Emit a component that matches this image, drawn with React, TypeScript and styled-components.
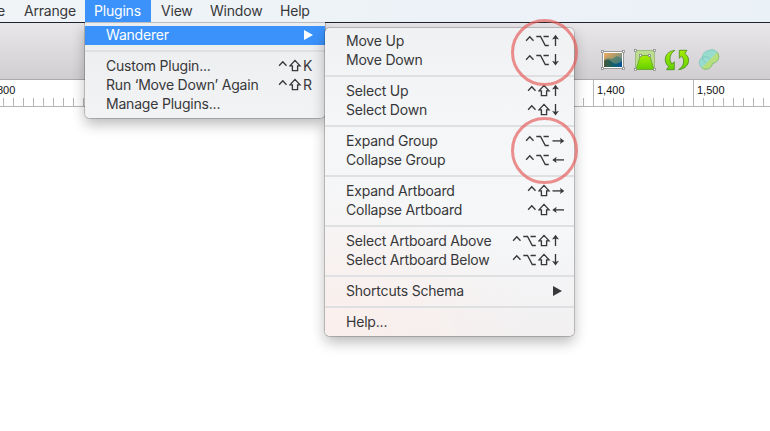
import React from "react";
import styled, { createGlobalStyle } from "styled-components";

const Global = createGlobalStyle`
  * { box-sizing: border-box; }
  body { margin: 0; background: #fff; overflow: hidden; }
`;

const Screen = styled.div`
  position: relative;
  width: 770px;
  height: 431px;
  overflow: hidden;
  background: #fff;
  color: #38383a;
  font: 14px/19px Inter, "Liberation Sans", sans-serif;
`;

const MenuBar = styled.nav`
  height: 23px;
  display: flex;
  background: linear-gradient(90deg, #f0f4f7, #eaf1f7);
  border-bottom: 1px solid #20252d;
`;

const BarItem = styled.div<{ $w: number; $pad: number; $active?: boolean }>`
  width: ${(p) => p.$w}px;
  height: ${(p) => (p.$active ? 22 : 23)}px;
  padding-left: ${(p) => p.$pad}px;
  line-height: 22px;
  white-space: nowrap;
  letter-spacing: -0.2px;
  color: ${(p) => (p.$active ? "#fff" : "#38383a")};
  background: ${(p) => (p.$active ? "#3b92fb" : "transparent")};
`;

const ClippedLetter = styled(BarItem)`
  text-indent: -3px;
`;

const Toolbar = styled.div`
  height: 57px;
  display: flex;
  gap: 6px;
  padding: 26px 0 0 600px;
  background: linear-gradient(#e9e7e9, #d0ced0);
  border-bottom: 1px solid #aaa;
`;

const Ruler = styled.div`
  height: 27px;
  display: flex;
  margin-left: -7px;
  border-bottom: 1px solid #b5b5b5;
`;

const RulerSection = styled.div`
  flex: 0 0 100px;
  height: 26px;
  border-left: 1px solid #b5b5b5;
  padding: 3px 0 0 3px;
  font: 11px/14px "Liberation Sans", sans-serif;
  color: #111;
  background: repeating-linear-gradient(90deg, transparent 0 9px, #b5b5b5 9px 10px) 0 18px / 99px 8px no-repeat;
`;

const Menu = styled.div<{ $x: number; $y: number; $w: number; $sub?: boolean }>`
  position: absolute;
  left: ${(p) => p.$x}px;
  top: ${(p) => p.$y}px;
  width: ${(p) => p.$w}px;
  padding: 4px 0;
  border-radius: ${(p) => (p.$sub ? "5px" : "0 0 5px 5px")};
  background: ${(p) =>
    p.$sub
      ? "radial-gradient(ellipse 210px 160px at 0 100%, #fbefec, rgba(251,239,236,0)), linear-gradient(#f0f1f3 0, #f4f6f8 30%, #f5f7f9 65%, #f2f0f1 100%)"
      : "linear-gradient(#b9bcc0 0 1px, #ebedef 1px, #f2f3f5)"};
  box-shadow: 0 0 0 1px rgba(0, 0, 0, 0.18), 0 6px 14px rgba(0, 0, 0, 0.28);
  ${(p) => (p.$sub ? "" : "clip-path: inset(0 -30px -30px -30px);")}
`;

const Row = styled.div<{ $active?: boolean }>`
  height: 19px;
  display: flex;
  justify-content: space-between;
  padding-left: 21px;
  line-height: 18px;
  color: ${(p) => (p.$active ? "#fff" : "#38383a")};
  background: ${(p) => (p.$active ? "#3b92fb" : "transparent")};
`;

const Label = styled.span`
  white-space: nowrap;
  letter-spacing: -0.2px;
`;

const Divider = styled.div`
  height: 2px;
  margin: 5px 0;
  background: #dfe0e2;
`;

const Keys = styled.span`
  display: flex;
  height: 19px;
`;

const KeyCell = styled.span`
  width: 23px;
  padding-left: 1px;
`;

const Arrow = styled.svg`
  width: 9px;
  height: 10px;
  margin: 4px 12px 0 0;
  fill: currentColor;
`;

const Ring = styled.div<{ $y: number }>`
  position: absolute;
  left: 511px;
  top: ${(p) => p.$y}px;
  width: 67px;
  height: 67px;
  border: 3px solid rgba(229, 91, 88, 0.68);
  border-radius: 50%;
`;

const glyphs: Record<string, { w: number; d: string; fill?: string }> = {
  c: { w: 11, d: "M1.1 8.7 L4.8 4.7 L8.5 8.7" },
  o: { w: 15, d: "M.3 4.5 H4.5 L9.3 13.5 H12.8 M7.5 4.5 H12.8" },
  s: { w: 13, d: "M6 3.4 L1 8.8 H3.4 V13.6 H8.6 V8.8 H11 Z" },
  u: { w: 23, d: "M4.5 14 V5", fill: "M4.5 2.8 L8 7.6 L4.5 6.4 L1 7.6 Z" },
  d: { w: 23, d: "M4.5 3 V12", fill: "M4.5 14.6 L8 9.8 L4.5 11 L1 9.8 Z" },
  r: { w: 23, d: "M1.5 8.9 H11", fill: "M13.3 8.9 L9 5.8 L9.8 8.9 L9 12 Z" },
  l: { w: 23, d: "M3.5 8.9 H13", fill: "M1.3 8.9 L5.6 5.8 L4.8 8.9 L5.6 12 Z" },
};

function Shortcut({ keys }: { keys: string }) {
  return (
    <Keys>
      {keys.split("").map((k, i) => {
        const g = glyphs[k];
        if (!g) return <KeyCell key={i}>{k}</KeyCell>;
        return (
          <svg key={i} width={g.w} height="19" viewBox={`0 0 ${g.w} 19`}>
            <path d={g.d} fill="none" stroke="currentColor" strokeWidth="1.35" />
            {g.fill && <path d={g.fill} fill="currentColor" />}
          </svg>
        );
      })}
    </Keys>
  );
}

const Triangle = () => (
  <Arrow viewBox="0 0 9 10">
    <path d="M0 0 L9 5 L0 10 Z" />
  </Arrow>
);

type Entry = null | { text: string; keys?: string; more?: boolean; active?: boolean };

const pluginMenu: Entry[] = [
  { text: "Wanderer", more: true, active: true },
  null,
  { text: "Custom Plugin...", keys: "csK" },
  { text: "Run ‘Move Down’ Again", keys: "csR" },
  { text: "Manage Plugins..." },
];

const wandererMenu: Entry[] = [
  { text: "Move Up", keys: "cou" },
  { text: "Move Down", keys: "cod" },
  null,
  { text: "Select Up", keys: "csu" },
  { text: "Select Down", keys: "csd" },
  null,
  { text: "Expand Group", keys: "cor" },
  { text: "Collapse Group", keys: "col" },
  null,
  { text: "Expand Artboard", keys: "csr" },
  { text: "Collapse Artboard", keys: "csl" },
  null,
  { text: "Select Artboard Above", keys: "cosu" },
  { text: "Select Artboard Below", keys: "cosd" },
  null,
  { text: "Shortcuts Schema", more: true },
  null,
  { text: "Help..." },
];

function Entries({ items }: { items: Entry[] }) {
  return (
    <>
      {items.map((e, i) =>
        e ? (
          <Row key={i} $active={e.active}>
            <Label>{e.text}</Label>
            {e.keys && <Shortcut keys={e.keys} />}
            {e.more && <Triangle />}
          </Row>
        ) : (
          <Divider key={i} />
        )
      )}
    </>
  );
}

const Handles = ({ points }: { points: number[][] }) => (
  <>
    {points.map(([x, y]) => (
      <rect key={`${x}-${y}`} x={x - 1} y={y - 1} width="2" height="2" fill="#fff" stroke="#8c8c8c" strokeWidth=".8" />
    ))}
  </>
);

function ToolIcons() {
  return (
    <>
      <svg width="26" height="24" viewBox="0 0 26 24">
        <defs>
          <linearGradient id="sky" x2="1" y2="1">
            <stop stopColor="#efa85c" />
            <stop offset=".45" stopColor="#a49a70" />
            <stop offset="1" stopColor="#0870b8" />
          </linearGradient>
          <linearGradient id="sea">
            <stop stopColor="#4a5933" />
            <stop offset=".5" stopColor="#13606a" />
            <stop offset="1" stopColor="#07549c" />
          </linearGradient>
        </defs>
        <rect x="2.5" y="2.5" width="21" height="17" fill="#fff" stroke="#999" />
        <rect x="4" y="4" width="18" height="14" fill="url(#sky)" />
        <path d="M4 11 Q8 8 12 10 L17 7 L22 10 V18 H4Z" fill="#467b6c" opacity=".7" />
        <path d="M4 12 Q8 9 12 13 T22 12 V18 H4Z" fill="url(#sea)" />
        <Handles points={[[2.5, 2.5], [23.5, 2.5], [2.5, 19.5], [23.5, 19.5]]} />
      </svg>
      <svg width="26" height="24" viewBox="0 0 26 24">
        <defs>
          <linearGradient id="lime" x2="0" y2="1">
            <stop stopColor="#a5ee00" />
            <stop offset="1" stopColor="#64cf00" />
          </linearGradient>
        </defs>
        <rect x="3.5" y="1.5" width="19" height="19" fill="#b4df7a" fillOpacity=".8" stroke="#9ebc7d" />
        <path d="M8.5 6.5 H17.5 L22 20.5 H4Z" fill="url(#lime)" stroke="#6ca338" strokeWidth=".9" />
        <Handles points={[[3.5, 1.5], [22.5, 1.5], [3.5, 20.5], [22.5, 20.5], [8.5, 6.5], [17.5, 6.5]]} />
      </svg>
      <svg width="26" height="24" viewBox="0 0 26 24">
        <g fill="url(#lime)" stroke="#47891d" strokeWidth=".8" strokeLinejoin="round">
          <path d="M10.8 1.4 C4 2 1 6.7 1.3 11 C1.5 14.3 2.9 16 4.8 17.5 L2.5 20.7 H10.3 V12.8 L7.8 15 C4.7 10.5 5.6 4.7 10.8 1.4Z" />
          <path d="M14.6 20.7 C21.4 20 24.9 15.3 24.6 11 C24.3 7.7 22.7 6 20.8 4.5 L23 1.3 H15.3 V9.3 L17.8 7 C21 11.5 20 17.4 14.6 20.7Z" />
        </g>
      </svg>
      <svg width="26" height="24" viewBox="0 0 26 24">
        <defs>
          <clipPath id="lower"><path d="M2.5 22 L23 1.5 H26 V24 H2.5Z" /></clipPath>
          <path id="blob" d="M6.4 8 A6.8 6.8 0 0 1 12.5 1.6 A6.8 6.8 0 0 1 22.8 7.6 Q22.8 13.2 16.5 14.4 A6.6 6.6 0 1 1 6.4 8Z" />
        </defs>
        <use href="#blob" fill="#99dbce" stroke="#7fc7bc" strokeWidth=".8" />
        <use href="#blob" fill="#b6df80" stroke="#8fba6d" strokeWidth=".8" clipPath="url(#lower)" />
        <path d="M6.4 8 Q11.8 6.6 14.4 10.2 M6.4 8 Q6.6 12.4 10.1 14.1" fill="none" stroke="#7dc5ba" strokeWidth=".8" />
      </svg>
    </>
  );
}

export default function App() {
  return (
    <Screen>
      <Global />
      <MenuBar>
        <ClippedLetter $w={17} $pad={0}>e</ClippedLetter>
        <BarItem $w={68} $pad={7}>Arrange</BarItem>
        <BarItem $w={66} $pad={9} $active>Plugins</BarItem>
        <BarItem $w={50} $pad={10}>View</BarItem>
        <BarItem $w={70} $pad={9}>Window</BarItem>
        <BarItem $w={60} $pad={9}>Help</BarItem>
      </MenuBar>
      <Toolbar><ToolIcons /></Toolbar>
      <Ruler>
        {["800", "", "", "", "", "", "1,400", "1,500"].map((n, i) => (
          <RulerSection key={i}>{n}</RulerSection>
        ))}
      </Ruler>
      <Menu $x={85} $y={22} $w={240}><Entries items={pluginMenu} /></Menu>
      <Menu $x={325} $y={28} $w={249} $sub><Entries items={wandererMenu} /></Menu>
      <Ring $y={19} />
      <Ring $y={117} />
    </Screen>
  );
}
